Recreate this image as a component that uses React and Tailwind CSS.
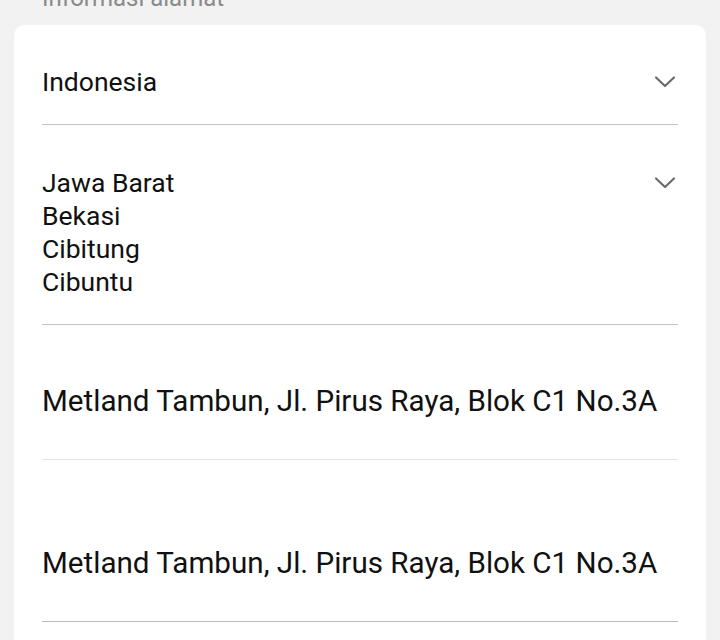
import React from 'react'

function Chevron() {
  return (
    <svg width="22" height="14" viewBox="0 0 22 14" fill="none" className="shrink-0">
      <path d="M2 2.5 L11 11 L20 2.5" stroke="#6b6b6b" strokeWidth="2.2" strokeLinecap="round" strokeLinejoin="round" />
    </svg>
  )
}

export default function App() {
  const font = { fontFamily: 'Roboto, "Liberation Sans", sans-serif' }
  return (
    <div className="w-[720px] h-[640px] overflow-hidden bg-[#f2f2f2]" style={font}>
      <div className="h-[25px] overflow-hidden px-[42px]">
        <div className="-mt-[17px] text-[24px] leading-[30px] text-[#8a8a8a]">Informasi alamat</div>
      </div>
      <div className="mx-[14px] bg-white rounded-t-[10px] px-[28px] pt-[40px] h-[700px]">
        <div className="flex items-center justify-between pr-[2px] h-[33px]">
          <span className="text-[26.5px] leading-[33px] text-[#111]">Indonesia</span>
          <Chevron />
        </div>
        <div className="mt-[26px] border-b border-[#c4c4c4]" />

        <div className="mt-[41px] flex justify-between pr-[2px]">
          <div className="text-[26.5px] leading-[33px] text-[#111]">
            <div>Jawa Barat</div>
            <div>Bekasi</div>
            <div>Cibitung</div>
            <div>Cibuntu</div>
          </div>
          <div className="h-[33px] flex items-center"><Chevron /></div>
        </div>
        <div className="mt-[26px] border-b border-[#c4c4c4]" />

        <div className="mt-[58px] text-[29.6px] leading-[36px] text-[#111]">
          Metland Tambun, Jl. Pirus Raya, Blok C1 No.3A
        </div>
        <div className="mt-[40px] border-b border-[#e2e2e2]" />

        <div className="mt-[85px] text-[29.6px] leading-[36px] text-[#111]">
          Metland Tambun, Jl. Pirus Raya, Blok C1 No.3A
        </div>
        <div className="mt-[40px] border-b border-[#bdbdbd]" />
      </div>
    </div>
  )
}
